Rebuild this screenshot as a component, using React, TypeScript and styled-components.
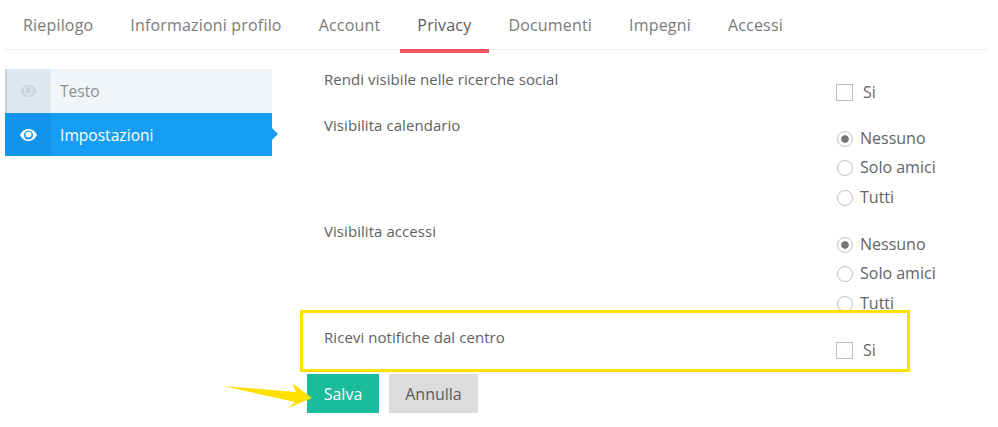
import React from "react";
import styled, { createGlobalStyle } from "styled-components";

const Global = createGlobalStyle`
  html, body { margin: 0; padding: 0; background: #fff; }
  body { font-family: "Open Sans", "Liberation Sans", sans-serif; color: #5b5b5b; }
  * { box-sizing: border-box; }
`;

const Page = styled.div`
  position: relative;
  width: 998px;
  height: 427px;
  overflow: hidden;
  padding: 0 10px 0 5px;
`;

const Tabs = styled.nav`
  display: flex;
  height: 50px;
  border-bottom: 1px solid #eeeeee;
`;

const Tab = styled.div<{ $active?: boolean }>`
  height: 53px;
  margin: 0 1px;
  padding: 14px 17.5px 0;
  font-size: 16px;
  line-height: 22px;
  letter-spacing: 0.18px;
  color: ${(p) => (p.$active ? "#5c5c5c" : "#7b7b7b")};
  border-bottom: 4px solid ${(p) => (p.$active ? "#f4555f" : "transparent")};
  &:first-child { padding-left: 17px; }
`;

const Body = styled.div`
  display: flex;
  margin-top: 19px;
`;

const Side = styled.aside`
  width: 267px;
  flex: none;
  margin-right: 52px;
`;

const SideItem = styled.div<{ $active?: boolean }>`
  position: relative;
  display: flex;
  height: ${(p) => (p.$active ? "43px" : "44px")};
  background: ${(p) => (p.$active ? "#169ef4" : "#f0f5f9")};
  color: ${(p) => (p.$active ? "#ffffff" : "#8f8f8f")};
  font-size: 15.5px;
  letter-spacing: 0.05px;
  line-height: 44px;
  align-items: flex-start;
  ${(p) =>
    p.$active &&
    `&::after {
      content: "";
      position: absolute;
      right: -6px;
      top: 15px;
      border-left: 6px solid #169ef4;
      border-top: 6px solid transparent;
      border-bottom: 6px solid transparent;
    }`}
`;

const SideIcon = styled.div<{ $active?: boolean }>`
  width: 46px;
  height: 100%;
  flex: none;
  display: flex;
  align-items: center;
  justify-content: center;
  margin-right: 9px;
  padding-right: ${(p) => (p.$active ? "0" : "2px")};
  background: ${(p) => (p.$active ? "#1093e8" : "#e0e8ef")};
  border-left: ${(p) => (p.$active ? "0" : "2px solid #c9d3da")};
  color: ${(p) => (p.$active ? "#ffffff" : "#cad5dc")};
`;

const Form = styled.div`
  width: 620px;
`;

const Row = styled.div<{ $h: number }>`
  display: grid;
  grid-template-columns: 512px 1fr;
  height: ${(p) => p.$h}px;
`;

const Label = styled.div`
  font-size: 15px;
  line-height: 21px;
  letter-spacing: 0.06px;
  color: #5f5f5f;
`;

const Controls = styled.div`
  padding-top: 12px;
`;

const CheckLine = styled.div`
  display: flex;
  align-items: center;
  height: 22px;
  font-size: 16px;
  color: #666;
`;

const Box = styled.span`
  width: 17px;
  height: 17px;
  border: 1px solid #bdbdbd;
  margin-right: 10px;
  background: #fff;
`;

const RadioGroup = styled.div`
  display: flex;
  flex-direction: column;
  margin-top: -4px;
`;

const RadioLine = styled.div`
  display: flex;
  align-items: center;
  height: 29.5px;
  font-size: 16px;
  color: #5f6468;
`;

const RadioMark = styled.span<{ $on?: boolean }>`
  width: 16px;
  height: 16px;
  flex: none;
  border-radius: 50%;
  border: 1px solid #c0c0c0;
  margin: 2px 7px 0 1px;
  background: ${(p) =>
    p.$on ? "radial-gradient(circle, #777 0 3.5px, #fff 4px)" : "#fff"};
`;

const Actions = styled.div`
  display: flex;
  gap: 10px;
  margin-left: -17px;
`;

const Btn = styled.button<{ $primary?: boolean }>`
  border: 0;
  height: 39px;
  font-family: inherit;
  font-size: 16px;
  padding: 0;
  width: ${(p) => (p.$primary ? "72px" : "89px")};
  background: ${(p) => (p.$primary ? "#1abc9c" : "#dcdcdc")};
  color: ${(p) => (p.$primary ? "#ffffff" : "#5b5b5b")};
`;

const Highlight = styled.div`
  position: absolute;
  left: 300px;
  top: 310px;
  width: 610px;
  height: 62px;
  border: 3px solid #ffe000;
  pointer-events: none;
`;

const Arrow = styled.svg`
  position: absolute;
  left: 222px;
  top: 381px;
`;

const Eye = () => (
  <svg width="17" height="12" viewBox="0 0 17 12" fill="currentColor">
    <path
      fillRule="evenodd"
      d="M8.500 0C4.800 0 1.700 2.300 0 6c1.700 3.700 4.800 6 8.500 6s6.800-2.300 8.500-6C15.300 2.300 12.200 0 8.500 0zM8.500 1.500a4.500 4.500 0 1 1 0 9 4.500 4.500 0 0 1 0-9z"
    />
    <circle cx="8.5" cy="5.5" r="3" />
  </svg>
);

const Radios = () => (
  <RadioGroup>
    <RadioLine><RadioMark $on />Nessuno</RadioLine>
    <RadioLine><RadioMark />Solo amici</RadioLine>
    <RadioLine><RadioMark />Tutti</RadioLine>
  </RadioGroup>
);

const tabs = ["Riepilogo", "Informazioni profilo", "Account", "Privacy", "Documenti", "Impegni", "Accessi"];

export default function App() {
  return (
    <Page>
      <Global />
      <Tabs>
        {tabs.map((t) => (
          <Tab key={t} $active={t === "Privacy"}>{t}</Tab>
        ))}
      </Tabs>
      <Body>
        <Side>
          <SideItem>
            <SideIcon><Eye /></SideIcon>
            <span>Testo</span>
          </SideItem>
          <SideItem $active>
            <SideIcon $active><Eye /></SideIcon>
            <span>Impostazioni</span>
          </SideItem>
        </Side>
        <Form>
          <Row $h={46}>
            <Label>Rendi visibile nelle ricerche social</Label>
            <Controls><CheckLine><Box />Si</CheckLine></Controls>
          </Row>
          <Row $h={106}>
            <Label>Visibilita calendario</Label>
            <Controls><Radios /></Controls>
          </Row>
          <Row $h={106}>
            <Label>Visibilita accessi</Label>
            <Controls><Radios /></Controls>
          </Row>
          <Row $h={47}>
            <Label>Ricevi notifiche dal centro</Label>
            <Controls><CheckLine><Box />Si</CheckLine></Controls>
          </Row>
          <Actions>
            <Btn $primary>Salva</Btn>
            <Btn>Annulla</Btn>
          </Actions>
        </Form>
      </Body>
      <Highlight />
      <Arrow width="92" height="32" viewBox="0 0 92 32">
        <polygon points="1,5 74,11 70,2 90,17 66,27 73,21" fill="#ffe000" />
      </Arrow>
    </Page>
  );
}
